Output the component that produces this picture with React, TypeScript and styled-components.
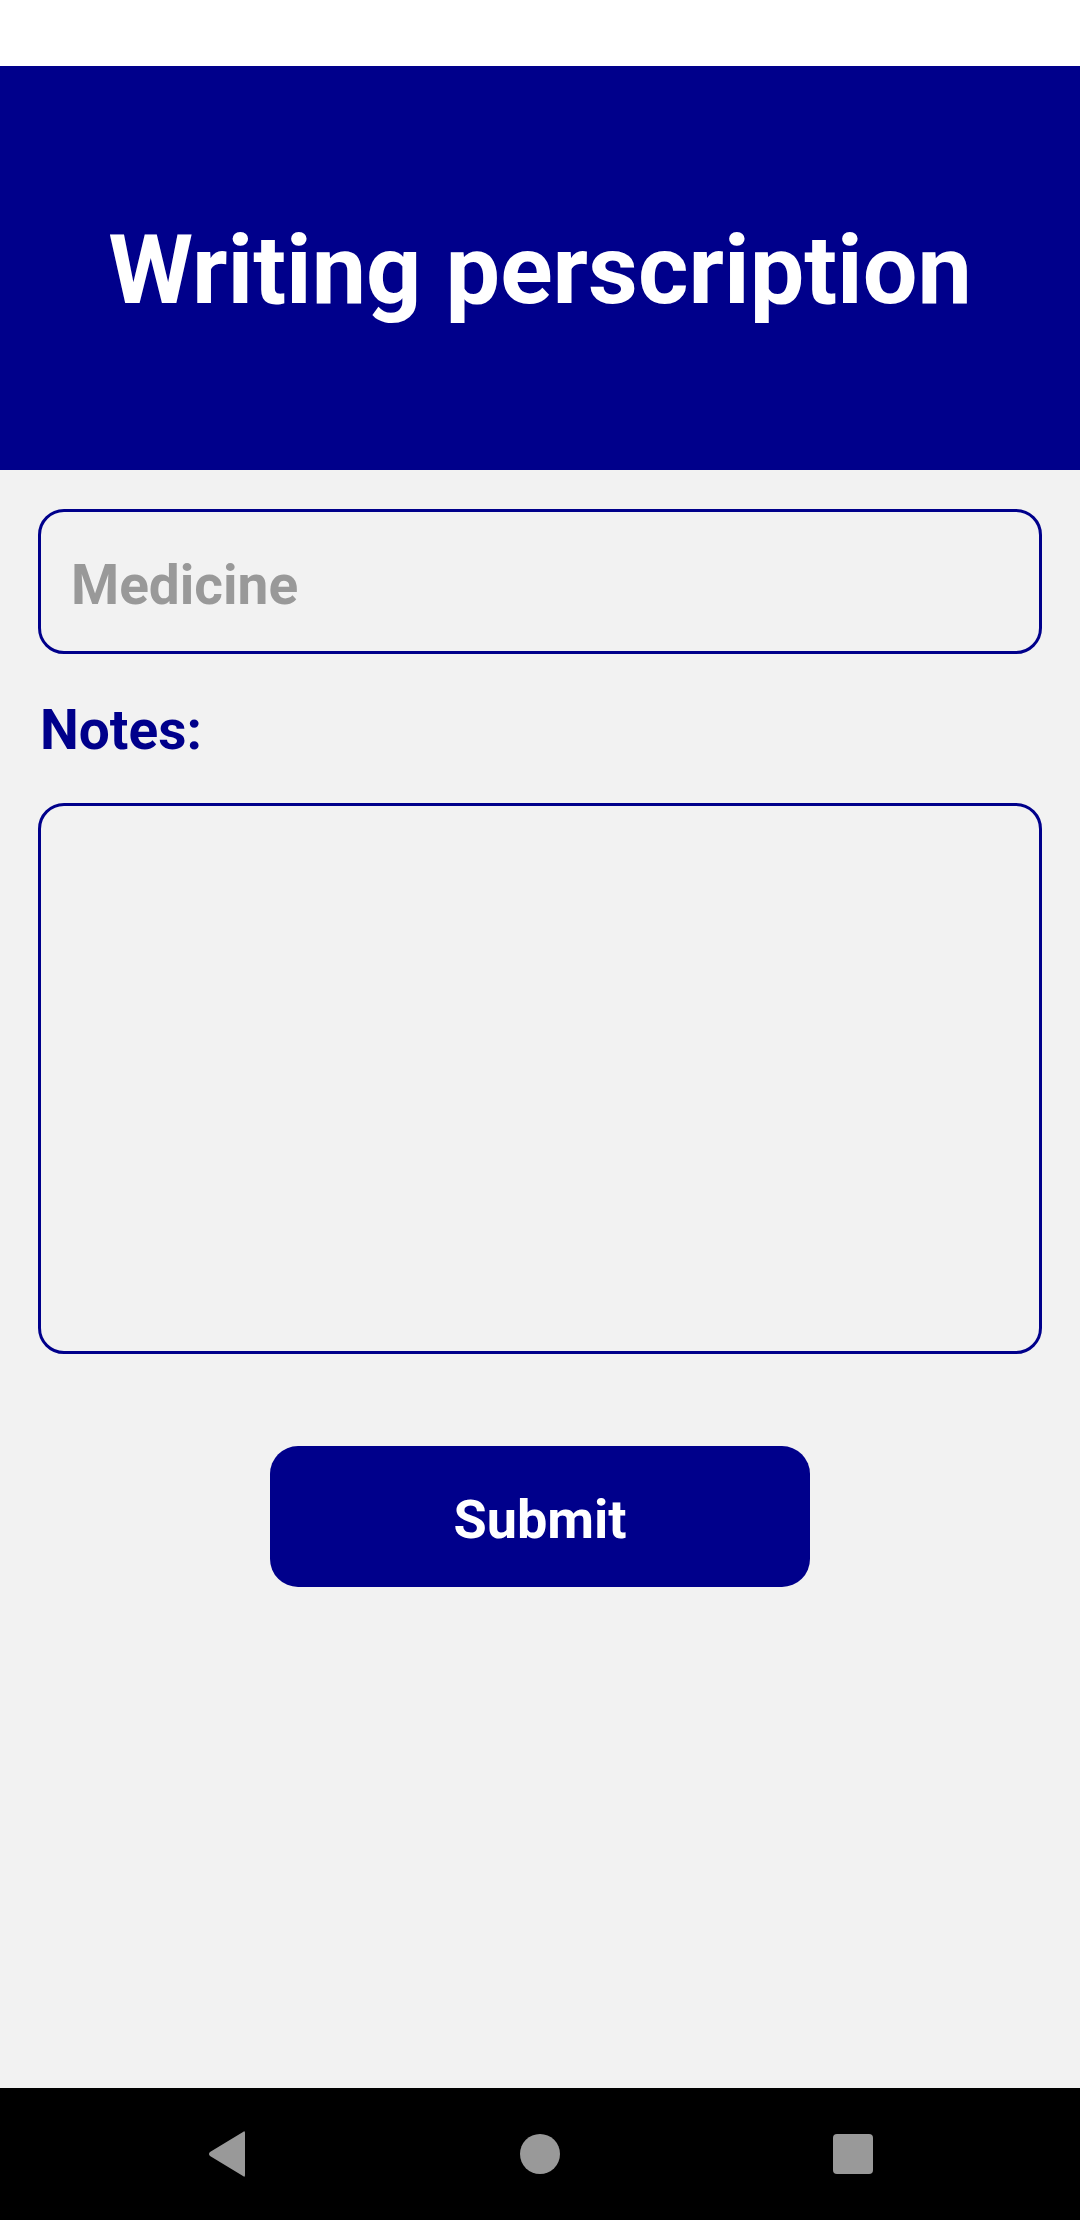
import React from "react";
import styled, { createGlobalStyle } from "styled-components";

const GlobalStyle = createGlobalStyle`
  html, body {
    margin: 0;
    padding: 0;
    background: #f2f2f2;
  }
  * { box-sizing: border-box; }
  body {
    font-family: Roboto, "Noto Sans", "Liberation Sans", sans-serif;
  }
`;

const BLUE = "#00008b";

const Screen = styled.div`
  width: 1080px;
  height: 2220px;
  display: flex;
  flex-direction: column;
  background: #f2f2f2;
`;

const StatusBar = styled.div`
  height: 66px;
  flex: none;
  background: #ffffff;
`;

const Header = styled.header`
  height: 404px;
  flex: none;
  background: ${BLUE};
  display: flex;
  align-items: center;
  justify-content: center;
  padding-top: 6px;
`;

const Title = styled.h1`
  margin: 0;
  color: #ffffff;
  font-family: Roboto, "Liberation Sans", sans-serif;
  font-weight: 700;
  font-size: 97px;
  line-height: 1.17;
`;

const Content = styled.main`
  flex: 1;
  display: flex;
  flex-direction: column;
  padding: 39px 38px 0 38px;
`;

const fieldBase = `
  width: 100%;
  border: 3px solid ${BLUE};
  border-radius: 26px;
  background: transparent;
  font-family: Roboto, "Liberation Sans", sans-serif;
  font-weight: 700;
  font-size: 55px;
  color: #222;
  outline: none;
`;

const MedicineInput = styled.input`
  ${fieldBase}
  height: 145px;
  padding: 6px 30px 0 30px;
  &::placeholder {
    color: #999999;
    opacity: 1;
  }
`;

const Label = styled.label`
  display: block;
  margin: 44px 0 0 2px;
  color: ${BLUE};
  font-family: Roboto, "Liberation Sans", sans-serif;
  font-weight: 700;
  font-size: 55px;
  line-height: 64px;
`;

const NotesArea = styled.textarea`
  ${fieldBase}
  display: block;
  height: 551px;
  margin-top: 41px;
  padding: 20px 30px;
  resize: none;
`;

const SubmitButton = styled.button`
  align-self: center;
  width: 540px;
  height: 141px;
  margin-top: 92px;
  border: none;
  border-radius: 28px;
  background: ${BLUE};
  color: #ffffff;
  font-family: Roboto, "Liberation Sans", sans-serif;
  font-weight: 700;
  font-size: 54px;
  padding: 6px 0 0 0;
  cursor: pointer;
`;

const NavBar = styled.nav`
  height: 132px;
  flex: none;
  background: #000000;
  display: grid;
  grid-template-columns: repeat(3, 1fr);
  align-items: center;
  justify-items: center;
  padding: 0 70px;
`;

const NavIcon = styled.svg`
  display: block;
  fill: #999999;
`;

export default function App() {
  return (
    <>
      <GlobalStyle />
      <Screen>
        <StatusBar />
        <Header>
          <Title>Writing perscription</Title>
        </Header>
        <Content>
          <MedicineInput placeholder="Medicine" />
          <Label htmlFor="notes">Notes:</Label>
          <NotesArea id="notes" />
          <SubmitButton type="button">Submit</SubmitButton>
        </Content>
        <NavBar>
          <NavIcon width="40" height="48" viewBox="0 0 40 48">
            <path d="M36 2 Q38 0 38 3 L38 45 Q38 48 36 46 L3 26 Q1 24 3 22 Z" />
          </NavIcon>
          <NavIcon width="42" height="42" viewBox="0 0 42 42">
            <circle cx="21" cy="21" r="20" />
          </NavIcon>
          <NavIcon width="42" height="42" viewBox="0 0 42 42">
            <rect x="1" y="1" width="40" height="40" rx="4" />
          </NavIcon>
        </NavBar>
      </Screen>
    </>
  );
}
